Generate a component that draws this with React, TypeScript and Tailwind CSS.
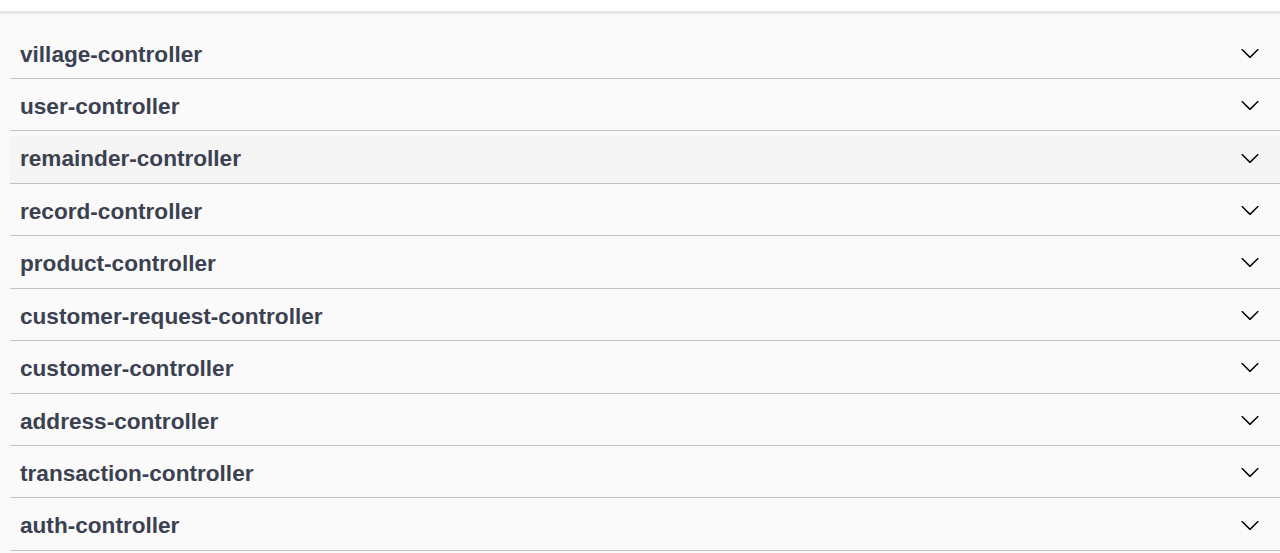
const TAGS = [
  "village-controller",
  "user-controller",
  "remainder-controller",
  "record-controller",
  "product-controller",
  "customer-request-controller",
  "customer-controller",
  "address-controller",
  "transaction-controller",
  "auth-controller",
];

const Arrow = () => (
  <svg width="20" height="20" viewBox="0 0 20 20" className="flex-shrink-0 -mt-[4px]" aria-hidden="true">
    <path
      fill="#000"
      d="M17.418 6.109c.272-.268.709-.268.979 0s.271.701 0 .969l-7.908 7.83c-.27.268-.707.268-.979 0l-7.908-7.83c-.27-.268-.27-.701 0-.969.271-.268.709-.268.979 0L10 13.25l7.418-7.141z"
    />
  </svg>
);

export default function App() {
  return (
    <div className="min-h-screen bg-[#fafafa]" style={{ fontFamily: '"Liberation Sans", Arial, sans-serif' }}>
      {/* strip above the tag list */}
      <div className="h-[12px] bg-white shadow-[0_1px_2px_rgba(0,0,0,0.15)] border-b border-[#e6e6e6]" />

      <div className="pt-[19.5px] pl-[10px]">
        {TAGS.map((tag, i) => (
          <div key={tag} className="mb-[5px]">
            <h3
              className={`flex items-center justify-between h-[47.44px] pl-[10px] pr-[20px] border-b border-[#3b4151]/30 cursor-pointer ${
                i === 2 ? "bg-black/[0.02]" : ""
              }`}
            >
              <span className="text-[22.6px] leading-[26.44px] font-bold text-[#3b4151]">{tag}</span>
              <Arrow />
            </h3>
          </div>
        ))}
      </div>
    </div>
  );
}
